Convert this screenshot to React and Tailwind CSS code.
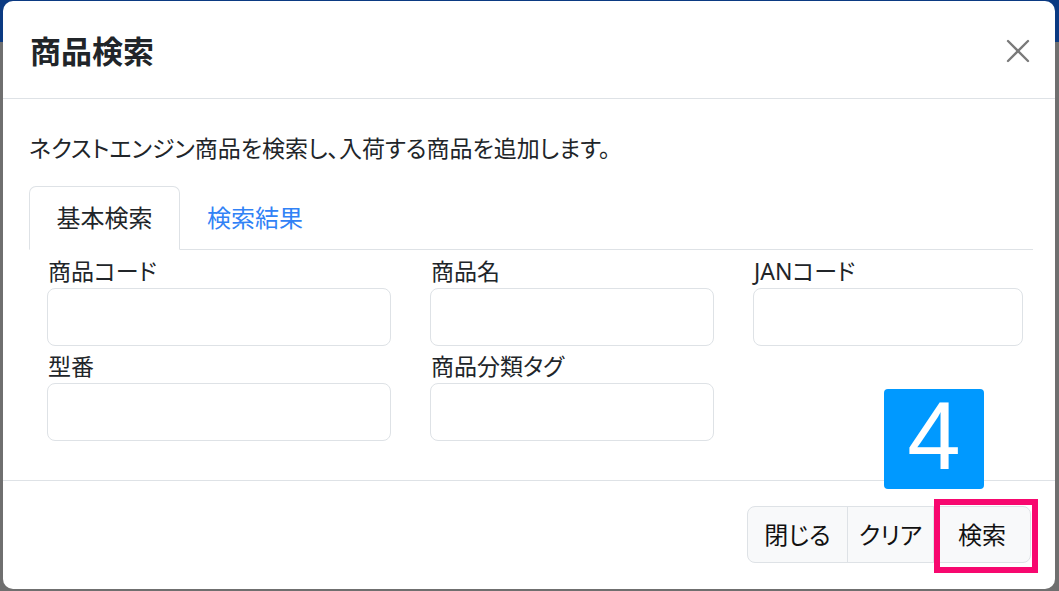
import { X } from "lucide-react";

function Field({ label }) {
    return (
        <div className="flex flex-col">
            <label className="h-[30px] leading-[30px] text-[23px] text-[#212529] pl-[1px]">{label}</label>
            <input type="text" className="mt-[2px] h-[58px] w-full rounded-[8px] border border-[#dee2e6] bg-white outline-none" />
        </div>
    );
}

export default function App() {
    return (
        <div className="relative h-[591px] w-[1059px] overflow-hidden bg-[#6f6f6f] font-['Noto_Sans','Noto_Sans_CJK_JP',sans-serif] [font-feature-settings:'palt']">
            {/* page behind the modal */}
            <div className="h-[42px] bg-[#0b3a82]"></div>

            {/* modal */}
            <div className="absolute left-[3px] top-[1px] flex h-[588px] w-[1052px] flex-col rounded-[10px] bg-white">
                <div className="flex h-[98px] items-center justify-between border-b border-[#dee2e6] pl-[27px] pr-[17px]">
                    <h4 className="pt-[4px] text-[31px] font-bold text-[#212529]">商品検索</h4>
                    <X size={40} strokeWidth={1.4} className="mt-[2px] text-[#7a7a7a]" />
                </div>

                <div className="h-[382px] border-b border-[#dee2e6] pl-[26px] pr-[22px]">
                    <p className="mt-[34px] text-[23px] leading-[30px] text-[#212529]">
                        ネクストエンジン商品を検索し、入荷する商品を追加します。
                    </p>

                    <div className="mt-[24px] flex h-[63px] items-end border-b border-[#dee2e6]">
                        <div className="-mb-[1px] flex h-[64px] w-[151px] items-center justify-center rounded-t-[7px] border border-b-white border-[#dee2e6] bg-white text-[24px] text-[#212529]">
                            基本検索
                        </div>
                        <div className="flex h-[63px] items-center px-[27px] text-[24px] text-[#3182f6]">
                            検索結果
                        </div>
                    </div>

                    <div className="ml-[18px] mt-[6px] grid grid-cols-[344px_284px_270px] gap-x-[39px] gap-y-[5px]">
                        <Field label="商品コード" />
                        <Field label="商品名" />
                        <Field label="JANコード" />
                        <Field label="型番" />
                        <Field label="商品分類タグ" />
                    </div>
                </div>

                <div className="flex flex-1 justify-end pr-[24px] pt-[25px]">
                    <div className="flex h-[57px] rounded-[8px] border border-[#dee2e6] bg-[#f8f9fa] text-[24px] text-[#111]">
                        <button className="w-[100px] border-r border-[#dee2e6]">閉じる</button>
                        <button className="w-[86px] border-r border-[#dee2e6]">クリア</button>
                        <button className="w-[96px]">検索</button>
                    </div>
                </div>

                {/* annotation overlays */}
                <div className="absolute left-[881px] top-[388px] flex h-[100px] w-[100px] items-center justify-center rounded-[4px] bg-[#0099ff] pb-[6px] font-['Liberation_Sans',Arial,sans-serif] text-[96px] leading-none text-white">
                    4
                </div>
                <div className="absolute left-[931px] top-[498px] h-[74px] w-[104px] border-[6px] border-[#f7086f]"></div>
            </div>
        </div>
    );
}
